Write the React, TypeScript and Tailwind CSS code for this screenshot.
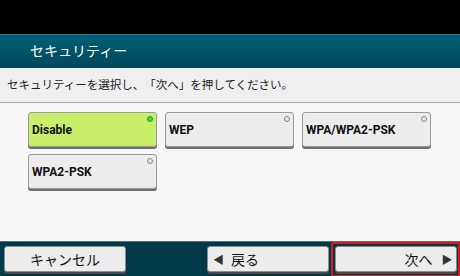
import React from "react";

const font = { fontFamily: '"Noto Sans CJK JP", "Noto Sans", sans-serif' };

function OptionButton({ label, selected }: { label: string; selected?: boolean }) {
  return (
    <div
      className={`relative flex h-[35px] w-[129px] items-center rounded-[3px] border border-[#9a9a9a] pl-[3px] shadow-[0_2px_0_#6f6f6f] ${
        selected ? "bg-[#c9ef6a]" : "bg-[#ececec]"
      }`}
    >
      <span
        className="text-[12px] font-bold text-[#111]"
        style={{ fontFamily: 'Roboto, "Liberation Sans", sans-serif' }}
      >
        {label}
      </span>
      <span
        className={`absolute right-[3px] top-[3px] h-[6px] w-[6px] rounded-full border ${
          selected ? "border-[#2f8f2f] bg-[#47d147]" : "border-[#8a8a8a] bg-[#e6e6e6]"
        }`}
      />
    </div>
  );
}

function NavButton({ children, className = "" }: { children: React.ReactNode; className?: string }) {
  return (
    <div
      className={`flex h-[26px] w-[122px] items-center rounded-[3px] border border-[#8d8d8d] bg-[#ececec] shadow-[0_2px_0_#4a4a4a] text-[14px] text-[#111] ${className}`}
    >
      {children}
    </div>
  );
}

export default function App() {
  return (
    <div className="flex h-[276px] w-[460px] flex-col overflow-hidden bg-black" style={font}>
      <div className="h-[34px] bg-black" />
      <div className="flex h-[34px] items-center border-t border-[#2a7d92] bg-gradient-to-b from-[#006077] to-[#00475a] pl-[30px] pb-[2px]">
        <span className="text-[14px] text-white">セキュリティー</span>
      </div>
      <div className="flex h-[35px] items-center border-b border-[#a7adb2] bg-[#efefef] pl-[7px]">
        <span className="text-[11.5px] text-[#222] [text-spacing-trim:space-all]">
          セキュリティーを選択し、「次へ」を押してください。
        </span>
      </div>
      <div className="flex h-[138px] flex-col gap-[7px] bg-[#f7f7f7] pl-[28px] pt-[9px]">
        <div className="flex gap-[8px]">
          <OptionButton label="Disable" selected />
          <OptionButton label="WEP" />
          <OptionButton label="WPA/WPA2-PSK" />
        </div>
        <div className="flex gap-[8px]">
          <OptionButton label="WPA2-PSK" />
        </div>
      </div>
      <div className="flex h-[35px] items-center border-t border-[#5d6f75] bg-[#003a48] pl-[4px]">
        <NavButton className="justify-center">キャンセル</NavButton>
        <NavButton className="ml-[81px] pl-[5px]">
          <span className="text-[11px] text-[#333]">◀</span>
          <span className="ml-[7px]">戻る</span>
        </NavButton>
        <div className="ml-[2px] flex h-[35px] w-[129px] items-center justify-center rounded-[2px] border-2 border-[#e8141b]">
          <NavButton className="justify-end pr-[3px]">
            <span>次へ</span>
            <span className="ml-[9px] text-[11px] text-[#333]">▶</span>
          </NavButton>
        </div>
      </div>
    </div>
  );
}
